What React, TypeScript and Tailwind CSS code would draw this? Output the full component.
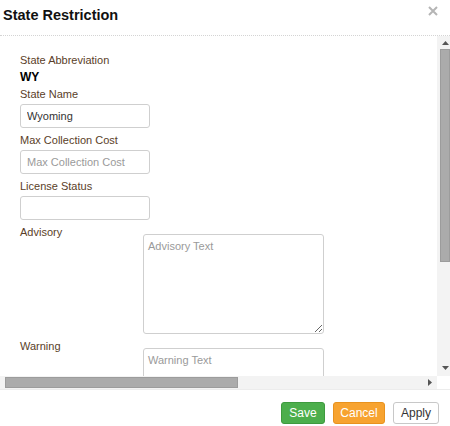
import React from 'react';

const font = { fontFamily: '"Liberation Sans", Arial, sans-serif' };

const Field: React.FC<{ label: string; value?: string; placeholder?: string }> = ({ label, value, placeholder }) => (
    <div className="mb-[4px]">
        <div className="text-[11px] leading-[16px] text-[#5a3e28] mb-[2px]">{label}</div>
        <input
            readOnly
            value={value ?? ''}
            placeholder={placeholder}
            className="block w-[130px] h-[24px] border border-[#cfcfcf] rounded-[3px] px-[6px] text-[11px] text-[#333] placeholder:text-[#9a9a9a] outline-none bg-white"
        />
    </div>
);

const TextRow: React.FC<{ label: string; placeholder: string }> = ({ label, placeholder }) => (
    <div className="flex mb-[4px]">
        <div className="w-[123px] shrink-0 text-[11px] leading-[16px] text-[#5a3e28]">{label}</div>
        <textarea
            readOnly
            placeholder={placeholder}
            className="block mt-[10px] w-[181px] h-[100px] shrink-0 border border-[#cfcfcf] rounded-[3px] px-[4px] py-[3px] text-[11px] text-[#333] placeholder:text-[#9a9a9a] outline-none bg-white"
        />
    </div>
);

const App: React.FC = () => {
    return (
        <div className="w-[450px] h-[426px] bg-white flex flex-col overflow-hidden" style={font}>
            {/* Header */}
            <div className="h-[36px] shrink-0 flex justify-between border-b border-dotted border-[#d4d4d4]">
                <h1 className="pl-[3px] pt-[6px] text-[14.5px] leading-[18px] font-bold text-[#111]">State Restriction</h1>
                <svg width="10" height="10" viewBox="0 0 10 10" className="mt-[6px] mr-[12px]">
                    <path d="M1 1 L9 9 M9 1 L1 9" stroke="#b5b5b5" strokeWidth="2" />
                </svg>
            </div>

            {/* Body with scrollbars */}
            <div className="grid grid-cols-[437px_13px] grid-rows-[340px_13px] shrink-0">
                <div className="overflow-hidden pl-[20px] pt-[16px]">
                    <div className="text-[11px] leading-[16px] text-[#5a3e28]">State Abbreviation</div>
                    <div className="text-[12px] leading-[18px] font-bold text-black">WY</div>
                    <Field label="State Name" value="Wyoming" />
                    <Field label="Max Collection Cost" placeholder="Max Collection Cost" />
                    <Field label="License Status" />
                    <TextRow label="Advisory" placeholder="Advisory Text" />
                    <TextRow label="Warning" placeholder="Warning Text" />
                </div>

                {/* vertical scrollbar */}
                <div className="bg-[#f3f3f3] flex flex-col items-center">
                    <svg width="7" height="4" viewBox="0 0 7 4" className="mt-[5px] ml-[3px]">
                        <path d="M0 4 L3.5 0 L7 4 Z" fill="#555" />
                    </svg>
                    <div className="mt-[4px] ml-[3px] w-[10px] h-[213px] bg-[#ababab] border border-[#9c9c9c]" />
                    <div className="flex-1" />
                    <svg width="7" height="4" viewBox="0 0 7 4" className="mb-[6px] ml-[3px]">
                        <path d="M0 0 L7 0 L3.5 4 Z" fill="#555" />
                    </svg>
                </div>

                {/* horizontal scrollbar */}
                <div className="bg-[#f3f3f3] flex items-center pl-[5px] pr-[5px]">
                    <div className="w-[233px] h-[11px] bg-[#ababab] border border-[#9c9c9c]" />
                    <div className="flex-1" />
                    <svg width="4" height="7" viewBox="0 0 4 7">
                        <path d="M0 0 L4 3.5 L0 7 Z" fill="#555" />
                    </svg>
                </div>
                <div className="bg-white" />
            </div>

            {/* Footer */}
            <div className="flex-1 border-t border-[#ececec] flex justify-end items-start gap-[8px] pt-[12px] pr-[11px]">
                <button className="w-[44px] h-[22px] rounded-[3px] bg-[#4cae4c] border border-[#3e9a3e] text-white text-[12px]">Save</button>
                <button className="w-[52px] h-[22px] rounded-[3px] bg-[#f7a330] border border-[#e8921e] text-white text-[12px]">Cancel</button>
                <button className="w-[46px] h-[22px] rounded-[3px] bg-white border border-[#c8c8c8] text-[#333] text-[12px]">Apply</button>
            </div>
        </div>
    );
};

export default App;
